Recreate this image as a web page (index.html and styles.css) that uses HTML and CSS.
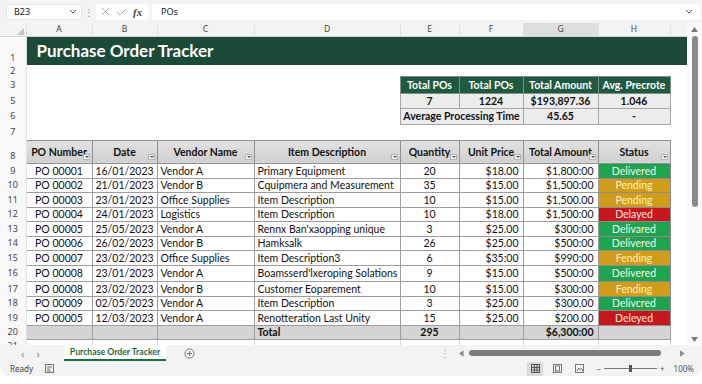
FILE: index.html
```html
<!DOCTYPE html>
<html lang="en">
<head>
    <meta charset="UTF-8">
    <meta name="viewport" content="width=device-width, initial-scale=1.0">
    <title>Purchase Order Tracker</title>
    <link rel="stylesheet" href="styles.css">
</head>
<body>
<div class="window">

    <!-- formula bar -->
    <div class="formula-bar">
        <div class="name-box">
            <span>B23</span>
            <svg width="8" height="5" viewBox="0 0 8 5"><path d="M1 1l3 3 3-3" fill="none" stroke="#555" stroke-width="1"/></svg>
        </div>
        <div class="fb-dots">&#8942;</div>
        <div class="fx-box">
            <svg width="9" height="9" viewBox="0 0 9 9"><path d="M1 1l7 7M8 1l-7 7" stroke="#a4a4a4" stroke-width="0.9"/></svg>
            <svg width="11" height="8" viewBox="0 0 11 8"><path d="M1 4l3 3 6-6" fill="none" stroke="#a4a4a4" stroke-width="0.9"/></svg>
            <span class="fx">fx</span>
        </div>
        <div class="formula-input">
            <span>POs</span>
            <svg width="8" height="5" viewBox="0 0 8 5"><path d="M1 1l3 3 3-3" fill="none" stroke="#555" stroke-width="1"/></svg>
        </div>
    </div>

    <div class="work-area">
        <div class="sheet-wrap">
            <table class="sheet">
                <colgroup>
                    <col style="width:26px"><col style="width:66px"><col style="width:65px"><col style="width:97px">
                    <col style="width:146px"><col style="width:59px"><col style="width:64px"><col style="width:75px">
                    <col style="width:72px"><col style="width:17px">
                </colgroup>

                <tr class="col-heads">
                    <th class="corner"><svg width="7" height="7" viewBox="0 0 7 7"><path d="M7 0v7H0z" fill="#c4c4c4"/></svg></th>
                    <th>A</th><th>B</th><th>C</th><th>D</th><th>E</th><th>F</th><th class="active">G</th><th>H</th><th></th>
                </tr>

                <tr class="r-title">
                    <th class="rh low">1</th>
                    <td colspan="9" class="title">Purchase Order Tracker</td>
                </tr>
                <tr class="r-2"><th class="rh">2</th><td colspan="9"></td></tr>
                <tr class="r-3">
                    <th class="rh">3</th>
                    <td colspan="4"></td>
                    <td class="sum-h">Total POs</td>
                    <td class="sum-h">Total POs</td>
                    <td class="sum-h">Total Amount</td>
                    <td class="sum-h">Avg. Precrote</td>
                    <td></td>
                </tr>
                <tr class="r-5">
                    <th class="rh">5</th>
                    <td colspan="4"></td>
                    <td class="sum">7</td>
                    <td class="sum">1224</td>
                    <td class="sum">$193,897.36</td>
                    <td class="sum">1.046</td>
                    <td></td>
                </tr>
                <tr class="r-6">
                    <th class="rh">6</th>
                    <td colspan="4"></td>
                    <td class="sum" colspan="2">Average Processing Time</td>
                    <td class="sum">45.65</td>
                    <td class="sum">-</td>
                    <td></td>
                </tr>
                <tr class="r-7"><th class="rh">7</th><td colspan="9"></td></tr>

                <tr class="r-head">
                    <th class="rh low">8</th>
                    <td class="th">PO Number<span class="flt"></span></td>
                    <td class="th">Date<span class="flt"></span></td>
                    <td class="th">Vendor Name<span class="flt"></span></td>
                    <td class="th">Item Description<span class="flt"></span></td>
                    <td class="th">Quantity<span class="flt"></span></td>
                    <td class="th">Unit Price<span class="flt"></span></td>
                    <td class="th">Total Amount<span class="flt"></span></td>
                    <td class="th">Status<span class="flt"></span></td>
                    <td></td>
                </tr>

                <tr class="h15"><th class="rh">9</th><td class="c">PO 00001</td><td class="c">16/01/2023</td><td class="l">Vendor A</td><td class="l">Primary Equipment</td><td class="c">20</td><td class="r">$18.00</td><td class="r">$1,800:00</td><td class="st ok">Delivered</td><td></td></tr>
                <tr class="h14"><th class="rh">10</th><td class="c">PO 00002</td><td class="c">21/01/2023</td><td class="l">Vendor B</td><td class="l">Cquipmera and Measurement</td><td class="c">35</td><td class="r">$15.00</td><td class="r">$1,500:00</td><td class="st wait">Pending</td><td></td></tr>
                <tr class="h15"><th class="rh">11</th><td class="c">PO 00003</td><td class="c">23/01/2023</td><td class="l">Office Supplies</td><td class="l">Item Description</td><td class="c">10</td><td class="r">$15.00</td><td class="r">$1,500.00</td><td class="st wait">Pending</td><td></td></tr>
                <tr class="h14"><th class="rh">12</th><td class="c">PO 00004</td><td class="c">24/01/2023</td><td class="l">Logistics</td><td class="l">Item Description</td><td class="c">10</td><td class="r">$18.00</td><td class="r">$1,500:00</td><td class="st late">Delayed</td><td></td></tr>
                <tr class="h15"><th class="rh">13</th><td class="c">PO 00005</td><td class="c">25/05/2023</td><td class="l">Vendor A</td><td class="l">Rennx Ban'xaopping unique</td><td class="c">3</td><td class="r">$25.00</td><td class="r">$300:00</td><td class="st ok">Delivared</td><td></td></tr>
                <tr class="h14"><th class="rh">14</th><td class="c">PO 00006</td><td class="c">26/02/2023</td><td class="l">Vendor B</td><td class="l">Hamksalk</td><td class="c">26</td><td class="r">$25.00</td><td class="r">$500:00</td><td class="st ok">Delivered</td><td></td></tr>
                <tr class="h15"><th class="rh">15</th><td class="c">PO 00007</td><td class="c">23/02/2023</td><td class="l">Office Supplies</td><td class="l">Item Description3</td><td class="c">6</td><td class="r">$35:00</td><td class="r">$990:00</td><td class="st wait">Fending</td><td></td></tr>
                <tr class="h16"><th class="rh">16</th><td class="c">PO 00008</td><td class="c">23/01/2023</td><td class="l">Vendor A</td><td class="l">Boamsserd'lxeroping Solations</td><td class="c">9</td><td class="r">$15.00</td><td class="r">$500:00</td><td class="st ok">Delivered</td><td></td></tr>
                <tr class="h15"><th class="rh">17</th><td class="c">PO 00008</td><td class="c">23/02/2023</td><td class="l">Vendor B</td><td class="l">Customer Eoparement</td><td class="c">10</td><td class="r">$15.00</td><td class="r">$300:00</td><td class="st wait">Fending</td><td></td></tr>
                <tr class="h14"><th class="rh">18</th><td class="c">PO 00009</td><td class="c">02/05/2023</td><td class="l">Vendor A</td><td class="l">Item Description</td><td class="c">3</td><td class="r">$25.00</td><td class="r">$300,00</td><td class="st ok">Delivcred</td><td></td></tr>
                <tr class="h15"><th class="rh">19</th><td class="c">PO 00005</td><td class="c">12/03/2023</td><td class="l">Vendor A</td><td class="l">Renotteration Last Unity</td><td class="c">15</td><td class="r">$25.00</td><td class="r">$200.00</td><td class="st late">Deleyed</td><td></td></tr>
                <tr class="h14 total"><th class="rh">20</th><td></td><td></td><td></td><td class="l">Total</td><td class="c">295</td><td></td><td class="r">$6,300:00</td><td></td><td class="outside"></td></tr>
                <tr class="h14 empty"><th class="rh">21</th><td></td><td></td><td></td><td></td><td></td><td></td><td></td><td></td><td class="outside"></td></tr>
            </table>
        </div>

        <div class="vscroll">
            <svg class="arrow" width="7" height="5" viewBox="0 0 7 5"><path d="M0 5L3.5 0 7 5z" fill="#7a7a7a"/></svg>
            <div class="v-thumb"></div>
            <div class="spacer"></div>
            <svg class="arrow" width="7" height="5" viewBox="0 0 7 5"><path d="M0 0h7L3.5 5z" fill="#7a7a7a"/></svg>
        </div>
    </div>

    <!-- sheet tabs -->
    <div class="tab-bar">
        <div class="tab-nav"><span>&#8249;</span><span>&#8250;</span></div>
        <div class="tab">Purchase Order Tracker</div>
        <svg class="add-sheet" width="11" height="11" viewBox="0 0 11 11"><circle cx="5.5" cy="5.5" r="4.6" fill="none" stroke="#777" stroke-width="1"/><path d="M5.5 3v5M3 5.5h5" stroke="#777" stroke-width="1"/></svg>
        <div class="hscroll">
            <span class="h-dots">&#8942;</span>
            <svg width="5" height="7" viewBox="0 0 5 7"><path d="M5 0v7L0 3.5z" fill="#8a8a8a"/></svg>
            <div class="h-thumb"></div>
            <svg width="5" height="7" viewBox="0 0 5 7"><path d="M0 0v7l5-3.5z" fill="#8a8a8a"/></svg>
        </div>
    </div>

    <!-- status bar -->
    <div class="status-bar">
        <span>Ready</span>
        <svg class="macro" width="9" height="9" viewBox="0 0 9 9"><rect x="0.5" y="0.5" width="8" height="8" fill="none" stroke="#777"/><path d="M2 3h5M2 5h3M2 7h4" stroke="#777"/></svg>
        <div class="views">
            <span class="view selected"><svg width="9" height="9" viewBox="0 0 9 9"><rect x="0.5" y="0.5" width="8" height="8" fill="none" stroke="#555"/><path d="M0.5 3.5h8M0.5 6h8M3.5 0.5v8M6 0.5v8" stroke="#555"/></svg></span>
            <span class="view"><svg width="9" height="9" viewBox="0 0 9 9"><rect x="0.5" y="0.5" width="8" height="8" fill="none" stroke="#777"/><rect x="2.5" y="2" width="4" height="5" fill="none" stroke="#777"/></svg></span>
            <span class="view"><svg width="9" height="9" viewBox="0 0 9 9"><rect x="0.5" y="0.5" width="8" height="8" fill="none" stroke="#777"/><path d="M2 7l2-3 1.5 2 1-1.5L8 7" fill="none" stroke="#777"/></svg></span>
        </div>
        <div class="zoom">
            <span>&minus;</span>
            <div class="slider"><span class="knob"></span></div>
            <span>+</span>
            <span class="pct">100%</span>
        </div>
    </div>

</div>
</body>
</html>
```

FILE: styles.css
```css
/* Spreadsheet look */
:root {
    --chrome: #f3f3f3;
    --title-green: #1b4a39;
    --head-green: #1f5940;
    --grid: #9d9d9d;
    --light-grid: #d8d8d8;
    --delivered: #1fa34e;
    --pending: #d29c1b;
    --delayed: #c7171c;
}

* {
    box-sizing: border-box;
}

body {
    margin: 0;
    background: #ffffff;
    font-family: 'Lato', 'Liberation Sans', sans-serif;
    color: #111;
}

.window {
    width: 702px;
    height: 376px;
    background: var(--chrome);
    border-radius: 0 0 8px 8px;
    overflow: hidden;
    display: flex;
    flex-direction: column;
}

/* formula bar */
.formula-bar {
    height: 23px;
    display: flex;
    align-items: center;
    padding: 0 2px 0 6px;
    font-family: 'Noto Sans', sans-serif;
    font-size: 9px;
    color: #222;
}

.name-box {
    width: 76px;
    height: 16px;
    background: #fff;
    border: 1px solid #e4e4e4;
    border-radius: 3px;
    display: flex;
    align-items: center;
    justify-content: space-between;
    padding: 0 4px 0 7px;
}

.fb-dots {
    width: 14px;
    text-align: center;
    color: #888;
    font-size: 10px;
}

.fx-box {
    width: 53px;
    height: 16px;
    background: #fff;
    border-radius: 3px;
    display: flex;
    align-items: center;
    gap: 6px;
    padding-left: 5px;
}

.fx {
    font-family: 'Liberation Serif', serif;
    font-style: italic;
    font-weight: bold;
    font-size: 11px;
    color: #444;
}

.formula-input {
    flex: 1;
    height: 16px;
    margin-left: 3px;
    background: #fff;
    border-radius: 3px;
    display: flex;
    align-items: center;
    justify-content: space-between;
    padding: 0 7px 0 9px;
}

/* grid */
.work-area {
    height: 322px;
    display: flex;
}

.sheet-wrap {
    width: 687px;
    height: 322px;
    overflow: hidden;
    background: #fff;
}

.sheet {
    border-collapse: collapse;
    table-layout: fixed;
    width: 687px;
    font-size: 10.5px;
    line-height: 10px;
}

.sheet td,
.sheet th {
    padding: 0;
    overflow: hidden;
    white-space: nowrap;
}

.col-heads {
    height: 13px;
}

.col-heads th {
    background: #f3f3f3;
    border-right: 1px solid #e2e2e2;
    border-bottom: 1px solid #d4d4d4;
    font-family: 'Noto Sans', sans-serif;
    font-weight: normal;
    font-size: 8.5px;
    color: #444;
}

.col-heads th:last-child {
    border-right: none;
}

.col-heads .active {
    background: #dedede;
}

.col-heads .corner {
    text-align: right;
    vertical-align: bottom;
    padding: 0 2px 1px 0;
    line-height: 0;
}

.sheet .rh {
    background: #f8f8f8;
    border-right: 1px solid #e0e0e0;
    font-family: 'Noto Sans', sans-serif;
    font-weight: normal;
    font-size: 9px;
    color: #444;
    text-align: center;
    vertical-align: middle;
}

.sheet .rh.low {
    vertical-align: bottom;
    padding-bottom: 2px;
}

.r-title { height: 29px; }
.r-2 { height: 11px; }
.r-3 { height: 17px; }
.r-5 { height: 15px; }
.r-6 { height: 16px; }
.r-7 { height: 16px; }
.r-head { height: 23px; }
.h14 { height: 14px; }
.h15 { height: 15px; }
.h16 { height: 16px; }

.sheet .title {
    background: var(--title-green);
    color: #fff;
    font-weight: bold;
    font-size: 17px;
    padding-left: 10px;
}

/* summary block */
.sum-h {
    background: var(--head-green);
    color: #fff;
    font-weight: bold;
    text-align: center;
    border: 1px solid #7f8f87;
}

.sum {
    background: #ececec;
    font-weight: bold;
    text-align: center;
    border: 1px solid #a6a6a6;
}

/* main table */
.th {
    position: relative;
    background: linear-gradient(#e2e2e2, #cfcfcf);
    border: 1px solid #8f8f8f;
    font-weight: bold;
    text-align: center;
}

.flt {
    position: absolute;
    right: 2px;
    bottom: 3px;
    width: 7px;
    height: 6px;
    background: #f2f2f2;
    border: 1px solid #b4b4b4;
}

.flt::after {
    content: "";
    position: absolute;
    left: 1px;
    top: 1px;
    border-left: 2px solid transparent;
    border-right: 2px solid transparent;
    border-top: 2px solid #555;
}

.c, .l, .r, .st {
    border: 1px solid var(--grid);
}

.c { text-align: center; }
.sheet .l { text-align: left; padding-left: 3px; }
.sheet .r { text-align: right; padding-right: 4px; }

.st {
    text-align: center;
    border-color: #8c8c8c;
}

.st.ok { background: var(--delivered); color: #eefbe9; }
.st.wait { background: var(--pending); color: #fff3c6; }
.st.late { background: var(--delayed); color: #ffe6e2; }

.total td {
    background: #d4d4d4;
    border: 1px solid var(--grid);
    font-weight: bold;
}

.empty td {
    border-right: 1px solid var(--light-grid);
    border-top: 1px solid var(--grid);
}

.sheet .outside {
    background: #fff;
    border: none;
    border-left: 1px solid var(--grid);
}

/* vertical scrollbar */
.vscroll {
    width: 15px;
    background: #fafafa;
    display: flex;
    flex-direction: column;
    align-items: center;
    padding: 4px 0 3px;
}

.v-thumb {
    width: 6px;
    height: 171px;
    margin-top: 4px;
    border-radius: 3px;
    background: #8a8a8a;
}

.vscroll .spacer {
    flex: 1;
}

/* sheet tabs */
.tab-bar {
    height: 16px;
    display: flex;
    align-items: center;
    font-family: 'Noto Sans', sans-serif;
    font-size: 9px;
    color: #888;
}

.tab-nav {
    width: 64px;
    display: flex;
    gap: 12px;
    padding-left: 21px;
    font-size: 11px;
}

.tab {
    width: 102px;
    height: 16px;
    background: #fff;
    color: #1d6b3e;
    font-family: 'Lato', sans-serif;
    font-weight: bold;
    font-size: 8.7px;
    white-space: nowrap;
    text-align: center;
    line-height: 14px;
    border-bottom: 2px solid #1d6b3e;
}

.add-sheet {
    margin-left: 18px;
}

.hscroll {
    margin-left: auto;
    width: 262px;
    display: flex;
    align-items: center;
    gap: 5px;
    padding-right: 17px;
}

.h-dots {
    color: #999;
    font-size: 10px;
    margin-right: 4px;
}

.h-thumb {
    width: 211px;
    height: 6px;
    border-radius: 3px;
    background: #7c7c7c;
    margin-right: 14px;
}

/* status bar */
.status-bar {
    height: 15px;
    display: flex;
    align-items: center;
    padding: 0 8px 0 10px;
    font-family: 'Noto Sans', sans-serif;
    font-size: 8px;
    color: #444;
}

.macro {
    margin-left: 12px;
}

.views {
    margin-left: auto;
    display: flex;
    gap: 6px;
}

.view {
    width: 16px;
    height: 14px;
    display: flex;
    align-items: center;
    justify-content: center;
}

.view.selected {
    background: #dadada;
}

.zoom {
    display: flex;
    align-items: center;
    gap: 3px;
    margin-left: 9px;
    color: #555;
}

.slider {
    position: relative;
    width: 53px;
    height: 1px;
    background: #777;
}

.knob {
    position: absolute;
    left: 25px;
    top: -3px;
    width: 3px;
    height: 7px;
    background: #555;
}

.pct {
    margin-left: 6px;
}
```
